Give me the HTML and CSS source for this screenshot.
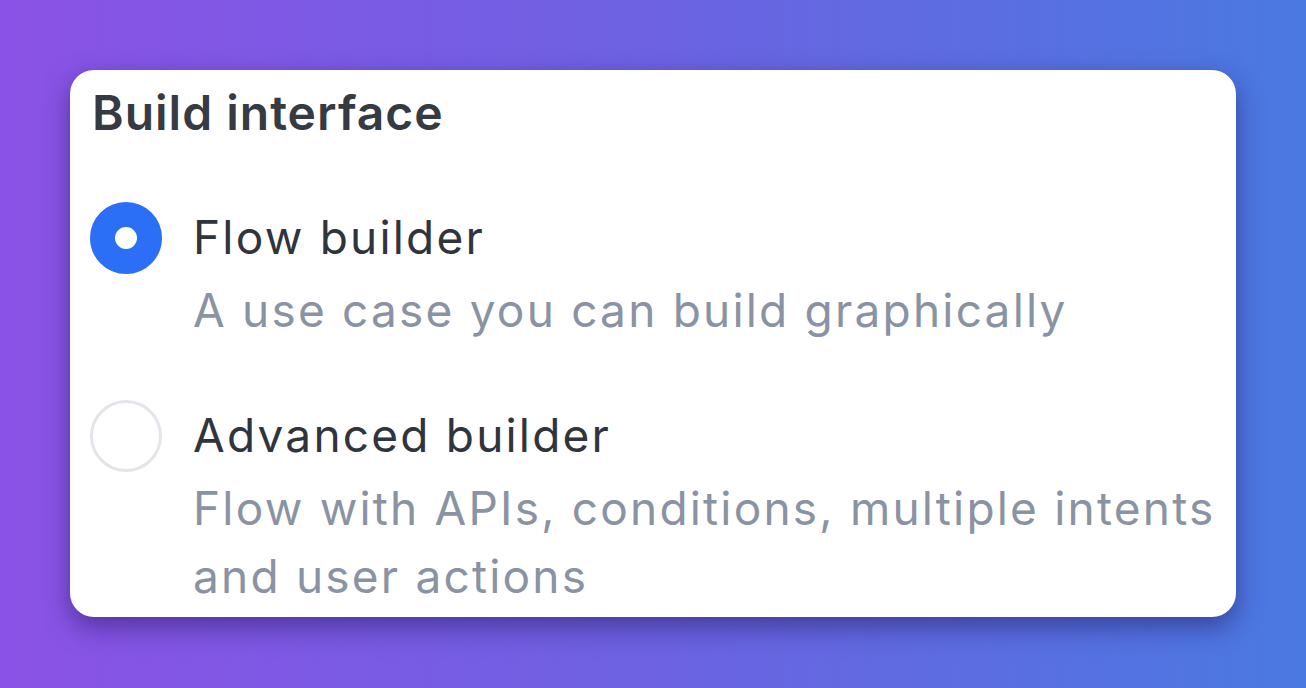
FILE: index.html
```html
<!DOCTYPE html>
<html lang="en">
<head>
<meta charset="utf-8">
<title>Build interface</title>
<link rel="stylesheet" href="styles.css">
</head>
<body>
<div class="stage">
  <section class="card">
    <h2 class="title">Build interface</h2>
    <div class="options">
      <label class="option">
        <span class="radio radio-on"></span>
        <span class="text">
          <span class="label">Flow builder</span>
          <span class="desc">A use case you can build graphically</span>
        </span>
      </label>
      <label class="option">
        <span class="radio"></span>
        <span class="text">
          <span class="label">Advanced builder</span>
          <span class="desc">Flow with APIs, conditions, multiple intents and user actions</span>
        </span>
      </label>
    </div>
  </section>
</div>
</body>
</html>
```

FILE: styles.css
```css
* { box-sizing: border-box; }
html, body { margin: 0; padding: 0; }
body {
  width: 1306px;
  height: 688px;
  overflow: hidden;
  font-family: Inter, "Noto Sans", sans-serif;
  background: linear-gradient(90deg, #8b52e6 0%, #6d62e2 50%, #4a79e1 100%);
}
.stage {
  padding: 70px 70px 0 70px;
}
.card {
  width: 1166px;
  height: 547px;
  background: #ffffff;
  border-radius: 24px;
  overflow: hidden;
  padding: 14px 6px 0 20px;
  box-shadow: 0 10px 26px rgba(30, 20, 90, 0.5);
}
.title {
  margin: 0 0 0 2px;
  font-size: 48px;
  line-height: 58px;
  font-weight: 600;
  color: #363a43;
  letter-spacing: 1px;
}
.options {
  margin-top: 60px;
  display: flex;
  flex-direction: column;
  gap: 56px;
}
.option {
  display: grid;
  grid-template-columns: 72px 1fr;
  column-gap: 31px;
  align-items: start;
}
.radio {
  width: 72px;
  height: 72px;
  border-radius: 50%;
  border: 3px solid #e3e5eb;
  background: #ffffff;
}
.radio-on {
  border: 25px solid #2a6ff5;
  background: #ffffff;
}
.text {
  display: flex;
  flex-direction: column;
  padding-top: 1px;
}
.label {
  font-size: 46px;
  line-height: 68px;
  color: #30343c;
  letter-spacing: 2.2px;
}
.desc {
  margin-top: 5px;
  font-size: 46px;
  line-height: 68px;
  color: #8a93a3;
  letter-spacing: 2.2px;
}
```
